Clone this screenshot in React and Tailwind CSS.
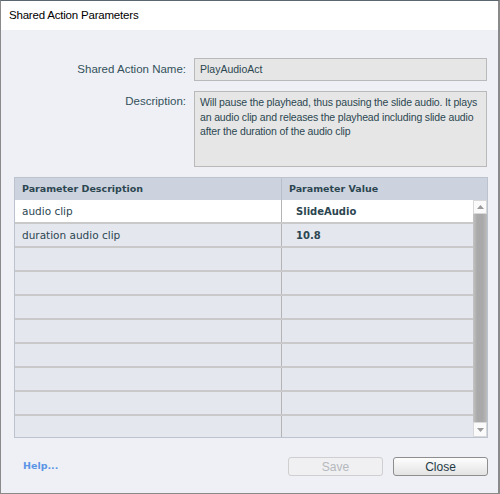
import React from "react"

const rows = [
  { name: "audio clip", value: "SlideAudio" },
  { name: "duration audio clip", value: "10.8" },
  {}, {}, {}, {}, {}, {}, {}, {},
]

const Scrollbar = () => (
  <div className="w-[14px] flex flex-col bg-[#e4e7ee]">
    <div className="h-[14px] bg-[#fafafa] border border-[#d8d8d8] flex items-center justify-center">
      <svg width="7" height="4" viewBox="0 0 7 4"><path d="M3.5 0 L7 4 L0 4 Z" fill="#9a9a9a" /></svg>
    </div>
    <div className="flex-1 bg-[linear-gradient(to_right,#c4c4c4,#a9a9a9_30%,#a9a9a9_70%,#bcbcbc)]" />
    <div className="h-[15px] bg-[#fafafa] border border-[#d8d8d8] flex items-center justify-center">
      <svg width="7" height="4" viewBox="0 0 7 4"><path d="M0 0 L7 0 L3.5 4 Z" fill="#9a9a9a" /></svg>
    </div>
  </div>
)

const App = () => {
  return (
    <div className="w-[500px] h-[494px] flex flex-col border-l border-r-2 border-b border-t border-[#8a8a8a] border-t-[#5a6670] overflow-hidden font-['Liberation_Sans',sans-serif]">
      <div className="h-[29px] bg-white flex items-center pl-[8px] pt-[1px]">
        <span className="text-[11.5px] text-black tracking-[-0.2px]">Shared Action Parameters</span>
      </div>
      <div className="flex-1 bg-[#eef0f5] flex flex-col pl-[13px] pr-[10px]">
        <div className="flex mt-[28px] gap-[8px]">
          <div className="w-[172px] text-right text-[11.5px] text-[#34505b] pt-[3px]">Shared Action Name:</div>
          <div className="w-[293px] h-[23px] bg-[#e6e6e6] border border-[#b9b9b9] px-[5px] flex items-center text-[10.5px] text-[#2c4651]">
            PlayAudioAct
          </div>
        </div>
        <div className="flex mt-[10px] gap-[8px]">
          <div className="w-[172px] text-right text-[11.5px] text-[#34505b] pt-[2px]">Description:</div>
          <div className="w-[293px] h-[76px] bg-[#e6e6e6] border border-[#b9b9b9] pl-[5px] pr-[3px] pt-[3px] text-[10.5px] leading-[14.5px] tracking-[-0.15px] text-[#2c4651]">
            Will pause the playhead, thus pausing the slide audio. It plays an audio clip and releases the playhead including slide audio after the duration of the audio clip
          </div>
        </div>
        <div className="mt-[10px] w-[474px] h-[261px] border border-[#bcc3cf] flex flex-col font-['DejaVu_Sans',sans-serif]">
          <div className="h-[22px] bg-[#cdd3de] flex shrink-0 text-[9.5px] font-bold text-[#2c4651]">
            <div className="w-[267px] border-r border-[#b7bfcb] pl-[7px] flex items-center">Parameter Description</div>
            <div className="flex-1 pl-[7px] flex items-center">Parameter Value</div>
          </div>
          <div className="flex-1 flex overflow-hidden">
            <div className="flex-1 flex flex-col overflow-hidden">
              {rows.map((r, i) => (
                <div key={i} className={`h-[24px] shrink-0 flex border-b-2 border-[#c9c9c9] ${i === 0 ? "bg-white" : "bg-[#e4e7ee]"}`}>
                  <div className="w-[267px] border-r border-[#b4b4b4] pl-[7px] pt-[1px] flex items-center text-[10.5px] text-[#2c4651]">{r.name}</div>
                  <div className="flex-1 pl-[14px] pt-[1px] flex items-center text-[10px] font-bold text-[#2c4651]">{r.value}</div>
                </div>
              ))}
            </div>
            <Scrollbar />
          </div>
        </div>
        <div className="flex items-center mt-[19px]">
          <a className="ml-[9px] text-[9.5px] font-bold text-[#5b95e6] font-['DejaVu_Sans',sans-serif]">Help...</a>
          <div className="ml-auto flex gap-[10px]">
            <button className="w-[95px] h-[19px] rounded-[3px] border border-[#cfcfcf] bg-[#f0f0f2] text-[12px] text-[#b4b8bc]">Save</button>
            <button className="w-[95px] h-[19px] rounded-[3px] border border-[#8e8e8e] bg-[linear-gradient(#fdfdfd,#e3e3e3)] text-[12px] text-[#1f3a46]">Close</button>
          </div>
        </div>
      </div>
    </div>
  )
}

export default App
